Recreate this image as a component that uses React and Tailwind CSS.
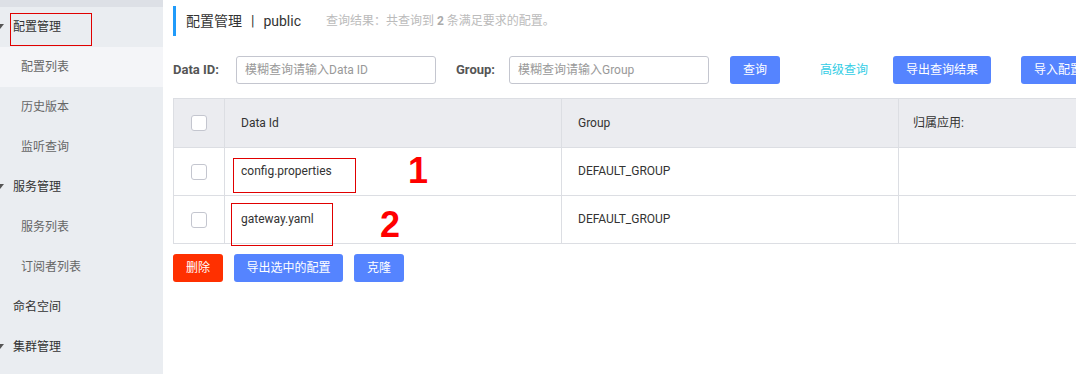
import React from "react";

const font = { fontFamily: 'Roboto, "Noto Sans CJK SC", "Liberation Sans", sans-serif' };

const menu = [
  { label: "配置管理", parent: true, boxed: true },
  { label: "配置列表", active: true },
  { label: "历史版本" },
  { label: "监听查询" },
  { label: "服务管理", parent: true },
  { label: "服务列表" },
  { label: "订阅者列表" },
  { label: "命名空间", top: true },
  { label: "集群管理", parent: true },
];

const rows = [
  { id: "config.properties", group: "DEFAULT_GROUP", mark: "1" },
  { id: "gateway.yaml", group: "DEFAULT_GROUP", mark: "2" },
];

function Checkbox() {
  return <div className="w-[16px] h-[16px] border border-[#c4c6cf] rounded-[3px] bg-white" />;
}

function Sidebar() {
  return (
    <div className="w-[163px] shrink-0 bg-[#eaedf1] h-full">
      <div className="h-[7px] bg-[#dde0e6]" />
      {menu.map((m) => (
        <div
          key={m.label}
          className={
            "relative h-[40px] flex items-center text-[12px] " +
            (m.active ? "bg-[#f4f5f8] " : "") +
            (m.parent || m.top ? "pl-[13px] text-[#333]" : "pl-[21px] text-[#666]")
          }
        >
          {m.parent && (
            <svg className="absolute left-[-4px] top-[17px]" width="8" height="6" viewBox="0 0 8 6">
              <path d="M0 0 L8 0 L4 5 Z" fill="#555" />
            </svg>
          )}
          {m.boxed && (
            <div className="absolute left-[10px] top-[6px] w-[82px] h-[33px] border border-[#e00000]" />
          )}
          {m.label}
        </div>
      ))}
    </div>
  );
}

export default function App() {
  return (
    <div className="flex h-[374px] w-[1076px] overflow-hidden bg-white" style={font}>
      <Sidebar />
      <div className="flex-1 pl-[10px] pt-[6px] overflow-hidden">
        <div className="h-[30px] border-l-[3px] border-[#209bfa] pl-[10px] flex items-center">
          <span className="text-[14px] text-[#333]">配置管理</span>
          <span className="text-[14px] text-[#333] mx-[9px]">|</span>
          <span className="text-[14px] text-[#333]">public</span>
          <span className="text-[12px] text-[#bbb] ml-[25px]">
            查询结果：共查询到 <b className="text-[#aaa]">2</b> 条满足要求的配置。
          </span>
        </div>

        <div className="mt-[20px] h-[28px] flex items-center whitespace-nowrap">
          <span className="shrink-0 text-[13px] font-bold text-[#555] w-[63px]">Data ID:</span>
          <div className="shrink-0 w-[200px] h-[28px] border border-[#c4c6cf] rounded-[3px] flex items-center pl-[8px] text-[12px] text-[#999]">
            模糊查询请输入Data ID
          </div>
          <span className="shrink-0 text-[13px] font-bold text-[#555] ml-[20px] w-[53px]">Group:</span>
          <div className="shrink-0 w-[200px] h-[28px] border border-[#c4c6cf] rounded-[3px] flex items-center pl-[8px] text-[12px] text-[#999]">
            模糊查询请输入Group
          </div>
          <button className="shrink-0 ml-[21px] w-[50px] h-[28px] rounded-[3px] bg-[#5584ff] text-white text-[12px]">
            查询
          </button>
          <span className="shrink-0 ml-[40px] text-[12px] text-[#33cde5]">高级查询</span>
          <button className="shrink-0 ml-[25px] w-[98px] h-[28px] rounded-[3px] bg-[#5584ff] text-white text-[12px]">
            导出查询结果
          </button>
          <button className="shrink-0 ml-[30px] w-[98px] h-[28px] rounded-[3px] bg-[#5584ff] text-white text-[12px] text-left pl-[13px]">
            导入配置
          </button>
        </div>

        <div className="mt-[14px] w-[1000px] border-t border-l border-[#dcdee3] text-[12px] text-[#333]">
          <div className="flex h-[49px] bg-[#ebecf0] border-b border-[#dcdee3]">
            <div className="w-[51px] flex items-center justify-center border-r border-[#dcdee3]">
              <Checkbox />
            </div>
            <div className="w-[337px] flex items-center pl-[16px] border-r border-[#dcdee3]">Data Id</div>
            <div className="w-[337px] flex items-center pl-[16px] border-r border-[#dcdee3]">Group</div>
            <div className="flex-1 flex items-center pl-[14px]">归属应用:</div>
          </div>
          {rows.map((r, i) => (
            <div key={r.id} className="flex h-[48px] border-b border-[#dcdee3]">
              <div className="w-[51px] flex items-center justify-center border-r border-[#dcdee3]">
                <Checkbox />
              </div>
              <div className="relative w-[337px] flex items-center pl-[16px] border-r border-[#dcdee3]">
                <span className="relative -top-[1px]">{r.id}</span>
                {i === 0 ? (
                  <>
                    <div className="absolute left-[8px] top-[10px] w-[123px] h-[35px] border border-[#e00000]" />
                    <span className="absolute left-[183px] top-[1px] text-[36px] leading-[44px] font-bold text-[#f00]" style={{ fontFamily: '"Liberation Sans", sans-serif' }}>
                      1
                    </span>
                  </>
                ) : (
                  <>
                    <div className="absolute left-[6px] top-[7px] w-[102px] h-[43px] border border-[#e00000]" />
                    <span className="absolute left-[155px] top-[7px] text-[36px] leading-[44px] font-bold text-[#f00]" style={{ fontFamily: '"Liberation Sans", sans-serif' }}>
                      2
                    </span>
                  </>
                )}
              </div>
              <div className="w-[337px] flex items-center pl-[16px] border-r border-[#dcdee3]">
                <span className="relative -top-[1px]">{r.group}</span>
              </div>
              <div className="flex-1" />
            </div>
          ))}
        </div>

        <div className="mt-[10px] flex gap-[11px]">
          <button className="w-[50px] h-[28px] rounded-[3px] bg-[#ff3000] text-white text-[12px]">删除</button>
          <button className="w-[109px] h-[28px] rounded-[3px] bg-[#5584ff] text-white text-[12px]">导出选中的配置</button>
          <button className="w-[50px] h-[28px] rounded-[3px] bg-[#5584ff] text-white text-[12px]">克隆</button>
        </div>
      </div>
    </div>
  );
}
